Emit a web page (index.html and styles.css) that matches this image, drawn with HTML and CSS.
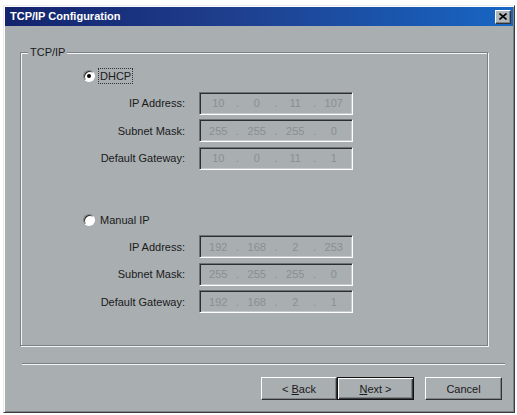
FILE: index.html
```html
<!DOCTYPE html>
<html>
<head>
<meta charset="utf-8">
<link rel="stylesheet" href="styles.css">
</head>
<body>
<div class="window">
  <div class="titlebar">
    <span class="title">TCP/IP Configuration</span>
    <span class="close">
      <svg width="8" height="7" viewBox="0 0 8 7"><path d="M0.5 0.5 L7.5 6.5 M7.5 0.5 L0.5 6.5" stroke="#000" stroke-width="1.6" fill="none"/></svg>
    </span>
  </div>
  <div class="body">
    <fieldset class="group">
      <legend class="legend">TCP/IP</legend>
      <div class="group-inner">
        <div class="radio-row">
          <span class="radio checked"></span>
          <span class="radio-label focus">DHCP</span>
        </div>
        <div class="fields">
          <span class="label">IP Address:</span>
          <div class="ip"><span>10</span><i>.</i><span>0</span><i>.</i><span>11</span><i>.</i><span>107</span></div>
          <span class="label">Subnet Mask:</span>
          <div class="ip"><span>255</span><i>.</i><span>255</span><i>.</i><span>255</span><i>.</i><span>0</span></div>
          <span class="label">Default Gateway:</span>
          <div class="ip"><span>10</span><i>.</i><span>0</span><i>.</i><span>11</span><i>.</i><span>1</span></div>
        </div>
        <div class="radio-row second">
          <span class="radio"></span>
          <span class="radio-label">Manual IP</span>
        </div>
        <div class="fields">
          <span class="label">IP Address:</span>
          <div class="ip"><span>192</span><i>.</i><span>168</span><i>.</i><span>2</span><i>.</i><span>253</span></div>
          <span class="label">Subnet Mask:</span>
          <div class="ip"><span>255</span><i>.</i><span>255</span><i>.</i><span>255</span><i>.</i><span>0</span></div>
          <span class="label">Default Gateway:</span>
          <div class="ip"><span>192</span><i>.</i><span>168</span><i>.</i><span>2</span><i>.</i><span>1</span></div>
        </div>
      </div>
    </fieldset>
    <div class="separator"></div>
    <div class="buttons">
      <button class="btn back">&lt; <u>B</u>ack</button>
      <button class="btn next default"><u>N</u>ext &gt;</button>
      <button class="btn cancel">Cancel</button>
    </div>
  </div>
</div>
</body>
</html>
```

FILE: styles.css
```css
html, body {
  margin: 0;
  padding: 0;
  background: #ffffff;
}
body {
  width: 517px;
  height: 415px;
  overflow: hidden;
  font-family: "Liberation Sans", Arial, sans-serif;
  font-size: 11px;
  color: #1a1a1a;
}
.window {
  margin: 5px 0 0 3px;
  width: 512px;
  height: 408px;
  box-sizing: border-box;
  background: #a9aeb1;
  border: 1px solid;
  border-color: #e8eaec #3a3c3e #3a3c3e #e8eaec;
  box-shadow: inset 1px 1px 0 #ffffff, inset -1px -1px 0 #7f8386;
  padding: 1px;
  display: flex;
  flex-direction: column;
}
.titlebar {
  height: 19px;
  flex: none;
  background: linear-gradient(to right, #13236c 0%, #1f3f8e 45%, #1766c4 100%);
  display: flex;
  align-items: center;
  justify-content: space-between;
  padding: 0 2px 0 5px;
}
.title {
  color: #ffffff;
  font-weight: bold;
  font-size: 11px;
  line-height: 13px;
}
.close {
  width: 16px;
  height: 14px;
  box-sizing: border-box;
  background: #b3b7ba;
  border: 1px solid;
  border-color: #ffffff #303234 #303234 #ffffff;
  box-shadow: inset -1px -1px 0 #7f8386;
  display: flex;
  align-items: center;
  justify-content: center;
}
.close svg { display: block; }
.body {
  flex: 1;
  padding: 20px 0 0 15px;
  display: flex;
  flex-direction: column;
}
.group {
  margin: 0;
  padding: 0;
  width: 468px;
  box-sizing: border-box;
  border: 1px solid #7c8083;
  box-shadow: inset 1px 1px 0 #f4f5f6, 1px 1px 0 #f4f5f6;
  min-width: 0;
}
.legend {
  margin-left: 7px;
  padding: 0 2px;
  line-height: 13px;
  background: #a9aeb1;
  color: #1a1a1a;
}
.group-inner {
  padding: 9px 0 32px 0;
}
.radio-row {
  display: flex;
  align-items: center;
  height: 16px;
  margin-left: 62px;
  gap: 4px;
}
.radio-row.second {
  margin-top: 42px;
}
.radio {
  width: 12px;
  height: 12px;
  box-sizing: border-box;
  border-radius: 50%;
  background: #ffffff;
  border: 1px solid;
  border-color: #7c8083 #ffffff #ffffff #7c8083;
  box-shadow: inset 1px 1px 0 #2a2a2a;
  position: relative;
}
.radio.checked::after {
  content: "";
  position: absolute;
  left: 3px;
  top: 3px;
  width: 4px;
  height: 4px;
  border-radius: 50%;
  background: #000000;
}
.radio-label {
  line-height: 14px;
  padding: 0 1px;
}
.radio-label.focus {
  outline: 1px dotted #333333;
  outline-offset: 0;
}
.fields {
  display: grid;
  grid-template-columns: 164px 154px;
  column-gap: 14px;
  grid-auto-rows: 23px;
  row-gap: 4.5px;
  margin-top: 7.5px;
  align-items: center;
}
.label {
  text-align: right;
}
.ip {
  height: 23px;
  box-sizing: border-box;
  border: 1px solid;
  border-color: #6e7275 #ffffff #ffffff #6e7275;
  box-shadow: inset 1px 1px 0 #2c2e30, inset -1px -1px 0 #c6c9cb;
  display: flex;
  align-items: center;
  padding: 0 1px;
  color: #8a8e91;
}
.ip span {
  flex: 1;
  text-align: center;
}
.ip i {
  font-style: normal;
  width: 4px;
  text-align: center;
}
.separator {
  margin: 17px 0 0 2px;
  width: 483px;
  height: 1px;
  background: #7c8083;
  border-bottom: 1px solid #f4f5f6;
}
.buttons {
  margin-top: 12px;
  display: flex;
  padding-left: 241px;
}
.btn {
  height: 23px;
  box-sizing: border-box;
  font-family: "Liberation Sans", Arial, sans-serif;
  font-size: 11px;
  color: #1a1a1a;
  background: #a9aeb1;
  border: 1px solid;
  border-color: #ffffff #303234 #303234 #ffffff;
  box-shadow: inset -1px -1px 0 #7f8386;
  padding: 0;
  margin: 0;
}
.btn.back { width: 76px; }
.btn.next { width: 77px; }
.btn.cancel { width: 77px; margin-left: 11px; }
.btn.default {
  border: 1px solid #111111;
  box-shadow: inset 1px 1px 0 #ffffff, inset -1px -1px 0 #3a3c3e, inset -2px -2px 0 #7f8386;
}
```
